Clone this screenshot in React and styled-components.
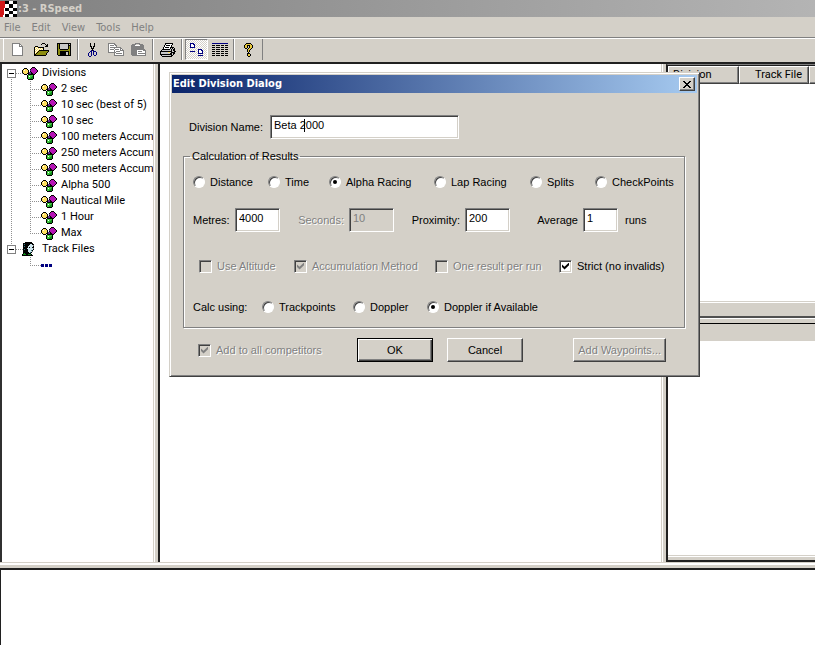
import React from "react";
import styled, { createGlobalStyle, css } from "styled-components";

const GlobalStyle = createGlobalStyle`
    * {
        box-sizing: border-box;
    }
    body {
        margin: 0;
        background-color: #fff;
        color: #000;
        font-family: Roboto, 'Noto Sans', sans-serif;
        font-size: 11px;
        line-height: 16px;
    }
    ul {
        margin: 0;
        padding: 0;
        list-style: none;
    }
`;

const palette = {
    k: "#000", d: "#808080", w: "#fff", y: "#ffe060", m: "#b414b4", g: "#3cc83c",
    G: "#128a1c", p: "#5a2d8c", o: "#8c8c10", l: "#c8c8c8", b: "#000080", t: "#2f7a80",
    c: "#cfe6ee", Y: "#e8c83c", r: "#d01818",
};

const art = {
    division: [
        "..........kkk...",
        "..kkk....kmmmk..",
        ".kyyyk..kmmmmmk.",
        "kywyyyk.pmmmmmmk",
        "kyyyyyk.kmmmmmmk",
        "kyyyyykppkmmmmk.",
        ".kyyykkppkkmmk..",
        "..kkk.kkkkkkk...",
        ".....kgggggk....",
        ".....kgwggGk....",
        ".....kgggGGk....",
        ".....kggGGGk....",
        "......kkkkk.....",
    ],
    track: [
        "...kkkkkkk..",
        ".kkkkkkkkkk.",
        ".ktkkkkkcckk",
        ".kkkkkkccccd",
        ".ktkkkccccck",
        ".kkkkkckcckk",
        ".kkkkccccccd",
        ".ktkkkccccck",
        ".kkkkkccctk.",
        ".kkkkkccccd.",
        ".kkkkkkctk..",
        ".kGkkkkkk...",
        "kGGGkkGGGk..",
        "kkkkkkkkkkk.",
    ],
    fresh: [
        "dddddddd...",
        "dwwwwwwdd..",
        "dwwwwwwdwd.",
        "dwwwwwwdddd",
        "dwwwwwwwwwd",
        "dwwwwwwwwwd",
        "dwwwwwwwwwd",
        "dwwwwwwwwwd",
        "dwwwwwwwwwd",
        "dwwwwwwwwwd",
        "dwwwwwwwwwd",
        "dwwwwwwwwwd",
        "ddddddddddd",
    ],
    open: [
        ".........kkk....",
        "........k...k.k.",
        ".............kk.",
        "..kkk.......kkk.",
        ".kywykkkkkk.....",
        ".kwywywywyk.....",
        ".kywywywywk.....",
        ".kwywykkkkkkkkkk",
        ".kywykoooooooook",
        ".kwykoooooooook.",
        ".kykoooooooook..",
        ".kkooooooooook..",
        ".kkkkkkkkkkkk...",
    ],
    save: [
        "kkkkkkkkkkkkkk",
        "kokllllllllklk",
        "kokllllllllkkk",
        "kokllllllllkok",
        "kokllllllllkok",
        "kokllllllllkok",
        "kookkkkkkkkook",
        "kooooooooooook",
        "kookkkkkkkkkok",
        "kookkkkkkllkok",
        "kookkkkkkllkok",
        "kookkkkkkllkok",
        ".kkkkkkkkkkkkk",
    ],
    cut: [
        "..k...k..",
        "..k...k..",
        "..k...k..",
        "..kk.kk..",
        "...k.k...",
        "...kkk...",
        "....k....",
        "...bkb...",
        "..bb.bbb.",
        ".b.b.b..b",
        "b..b.b..b",
        "b..b.b..b",
        "b..b..bb.",
        ".bb......",
    ],
    copy: [
        "ddddddd.........",
        "dwwwwwdd........",
        "dwddddwdd.......",
        "dwwwwwwwd.......",
        "dwddddddddddd...",
        "dwwwwwdwwwwwdd..",
        "dwddddwddddwdwd.",
        "dwwwwwdwwwwwdddd",
        "dwwwwwdwddddwwwd",
        "ddddddddwwwwwwwd",
        "......dwddddddwd",
        "......dwwwwwwwwd",
        "......dddddddddd",
    ],
    paste: [
        "....ddddd......",
        ".dddd...dddd...",
        "ddddwwwwwdddd..",
        "ddddddddddddd..",
        "ddddddddddddd..",
        "ddddddddddddd..",
        "dddddddddddddd.",
        "ddddddwwwwwwddd",
        "ddddddwddddwwwd",
        "ddddddwwwwwwwwd",
        "ddddddwdddddddd",
        "ddddddwwwwwwwwd",
        ".dddddddddddddd",
    ],
    print: [
        ".....kkkkkkkk...",
        ".....kwwwwwwk...",
        "....kwkkkkwk....",
        "....kwwwwwwk....",
        "...kwkkkkwkkkk..",
        "...kwwwwwwklklk.",
        "..kkkkkkkklklkk.",
        ".klllllllllklkk.",
        "kkkkkkkkkkkkllkk",
        "klllllllyylkkkk.",
        "klllllllllkklkk.",
        "kkkkkkkkkkkklk..",
        ".klllllllllkk...",
        "..kkkkkkkkkk....",
    ],
    places: [
        "bbbb..........",
        "bwwbb.........",
        "bwwwb.........",
        "bwwwb.........",
        "bbbbb.........",
        "..............",
        "........bbbb..",
        "........bwwbb.",
        "bbbbb...bwwwb.",
        "........bwwwb.",
        "........bbbbb.",
        "..............",
        "........bbbbb.",
    ],
    grid: [
        "bbbbbbbbbbbbbbbb",
        "................",
        "kkk.kkkk.kkk.kkk",
        "................",
        "kkk.kkkk.kkk.kkk",
        "................",
        "kkk.kkkk.kkk.kkk",
        "................",
        "kkk.kkkk.kkk.kkk",
        "................",
        "kkk.kkkk.kkk.kkk",
        "................",
        "kkk.kkkk.kkk.kkk",
    ],
    help: [
        "..kkkkk...",
        ".kYYYYYk..",
        "kYYkkkYYk.",
        "kYYk.kYYk.",
        "kYYk.kYYk.",
        ".kk.kYYk..",
        "...kYYk...",
        "...kYk....",
        "...kYk....",
        "....k.....",
        "...kkk....",
        "...kYYk...",
        "...kYYk...",
        "....kk....",
    ],
    dots: ["bbb.bbb.bbb", "bbb.bbb.bbb", "bbb.bbb.bbb"],
    flag: [
        "rrrrrkkkkwwwwkkkk",
        "rrrrrkkkkwwwwkkkk",
        "rrrrrkkkkwwwwkkkk",
        "rrrrrwwwwkkkkwwww",
        "rrrrrwwwwkkkkwwww",
        "rrrrrwwwwkkkkwwww",
        "rrrrrwwwwkkkkwwww",
        "rrrrwkkkkwwwwkkkk",
        "rrrrwkkkkwwwwkkkk",
        "rrrrwkkkkwwwwkkkk",
        "rrrrwwwwwkkkkwwww",
        "rrrrwwwwwkkkkwwww",
        "rrrrwwwwwkkkkwwww",
        "rrrrwkkkkwwwwkkkk",
        "rrrwwkkkkwwwwkkkk",
        "rrrwwkkkkwwwwkkkk",
    ],
};

const Icon = ({ name }) => {
    const rows = art[name];
    return (
        <Svg width={rows[0].length} height={rows.length} aria-hidden="true">
            {rows.map((row, y) =>
                [...row].map((ch, x) =>
                    ch === "." ? null : <rect key={`${x}-${y}`} x={x} y={y} width="1" height="1" fill={palette[ch]} />
                )
            )}
        </Svg>
    );
};

const menus = ["File", "Edit", "View", "Tools", "Help"];

const toolGroups = [
    [{ icon: "fresh", label: "New" }, { icon: "open", label: "Open" }, { icon: "save", label: "Save" }],
    [{ icon: "cut", label: "Cut" }, { icon: "copy", label: "Copy" }, { icon: "paste", label: "Paste" }],
    [{ icon: "print", label: "Print" }],
    [{ icon: "places", label: "Places", pressed: true }, { icon: "grid", label: "Details" }],
    [{ icon: "help", label: "Help" }],
];

const divisions = [
    "2 sec",
    "10 sec (best of 5)",
    "10 sec",
    "100 meters Accum",
    "250 meters Accum",
    "500 meters Accum",
    "Alpha 500",
    "Nautical Mile",
    "1 Hour",
    "Max",
];

const modes = ["Distance", "Time", "Alpha Racing", "Lap Racing", "Splits", "CheckPoints"];
const sources = ["Trackpoints", "Doppler", "Doppler if Available"];

const Option = ({ type, name, label, checked, disabled }) => (
    <OptionLabel $disabled={disabled}>
        {type === "radio" ? (
            <Radio type="radio" name={name} defaultChecked={checked} />
        ) : (
            <Check type="checkbox" defaultChecked={checked} disabled={disabled} />
        )}
        <span>{label}</span>
    </OptionLabel>
);

const NavTree = () => (
    <TreePane>
        <Trunk>
            <Branch>
                <Expander type="button" aria-label="Collapse Divisions" />
                <IconCell><Icon name="division" /></IconCell>
                <span>Divisions</span>
            </Branch>
            <Leaves>
                {divisions.map((name) => (
                    <Leaf key={name}>
                        <Icon name="division" />
                        <span>{name}</span>
                    </Leaf>
                ))}
            </Leaves>
            <Branch>
                <Expander type="button" aria-label="Collapse Track Files" />
                <IconCell><Icon name="track" /></IconCell>
                <span>Track Files</span>
            </Branch>
        </Trunk>
        <LooseLeaves>
            <Leaf>
                <Icon name="dots" />
            </Leaf>
        </LooseLeaves>
    </TreePane>
);

const EditDivisionDialog = () => (
    <Dialog role="dialog" aria-labelledby="dialog-title">
        <DialogTitle>
            <span id="dialog-title">Edit Division Dialog</span>
            <CloseButton type="button" aria-label="Close">
                <Svg width="8" height="7" aria-hidden="true">
                    <path d="M0 0h2v1h1v1h2v-1h1v-1h2v1h-1v1h-1v1h-1v1h1v1h1v1h1v1h-2v-1h-1v-1h-2v1h-1v1h-2v-1h1v-1h1v-1h1v-1h-1v-1h-1v-1h-1z" />
                </Svg>
            </CloseButton>
        </DialogTitle>
        <NameRow>
            <label htmlFor="division-name">Division Name:</label>
            <NameBox>
                <Field id="division-name" defaultValue="Beta 2000" />
                <Caret />
            </NameBox>
        </NameRow>
        <Group>
            <legend>Calculation of Results</legend>
            <ModeRow>
                {modes.map((mode) => (
                    <Option key={mode} type="radio" name="mode" label={mode} checked={mode === "Alpha Racing"} />
                ))}
            </ModeRow>
            <NumberRow>
                <label htmlFor="metres">Metres:</label>
                <Field id="metres" defaultValue="4000" />
                <FieldLabel htmlFor="seconds" $disabled>Seconds:</FieldLabel>
                <Field id="seconds" defaultValue="10" disabled />
                <FieldLabel htmlFor="proximity">Proximity:</FieldLabel>
                <Field id="proximity" defaultValue="200" />
                <FieldLabel htmlFor="average">Average</FieldLabel>
                <Field id="average" defaultValue="1" />
                <span>runs</span>
            </NumberRow>
            <CheckRow>
                <Option label="Use Altitude" disabled />
                <Option label="Accumulation Method" checked disabled />
                <Option label="One result per run" disabled />
                <Option label="Strict (no invalids)" checked />
            </CheckRow>
            <SourceRow>
                <span>Calc using:</span>
                {sources.map((source) => (
                    <Option key={source} type="radio" name="source" label={source} checked={source === "Doppler if Available"} />
                ))}
            </SourceRow>
        </Group>
        <ButtonRow>
            <Option label="Add to all competitors" checked disabled />
            <PushButton type="button" $primary>OK</PushButton>
            <PushButton type="button">Cancel</PushButton>
            <PushButton type="button" disabled>Add Waypoints...</PushButton>
        </ButtonRow>
    </Dialog>
);

const App = () => (
    <Window>
        <GlobalStyle />
        <TitleBar>
            <Icon name="flag" />
            <span>:3 - RSpeed</span>
        </TitleBar>
        <MenuBar>
            {menus.map((menu) => (
                <MenuItem key={menu} type="button">{menu}</MenuItem>
            ))}
        </MenuBar>
        <Toolbar>
            {toolGroups.map((group) => (
                <ToolGroup key={group[0].icon}>
                    {group.map((tool) => (
                        <ToolButton key={tool.icon} type="button" aria-label={tool.label} $pressed={tool.pressed}>
                            <Icon name={tool.icon} />
                        </ToolButton>
                    ))}
                </ToolGroup>
            ))}
        </Toolbar>
        <Workspace>
            <NavTree />
            <Splitter />
            <MapPane />
            <Splitter />
            <ResultsPane>
                <ResultsTable>
                    <thead>
                        <tr>
                            <HeadCell>Division</HeadCell>
                            <HeadCell $right>Track File</HeadCell>
                            <HeadCell />
                        </tr>
                    </thead>
                </ResultsTable>
                <ResultsBody />
                <ScrollTrack />
                <Divider />
                <LowerHead />
                <LowerBody />
                <LowerEdge />
            </ResultsPane>
        </Workspace>
        <BottomSplitter />
        <BottomPane />
        <EditDivisionDialog />
    </Window>
);

export default App;

const raised = css`
    border: 1px solid;
    border-color: #fff #404040 #404040 #fff;
    box-shadow: inset -1px -1px #808080;
`;
const sunken = css`
    border: 1px solid;
    border-color: #808080 #fff #fff #808080;
    box-shadow: inset 1px 1px #404040, inset -1px -1px #d4d0c8;
`;
const etched = css`
    color: #808080;
    text-shadow: 1px 1px #fff;
`;

const Svg = styled.svg`
    display: block;
    flex: none;
    shape-rendering: crispEdges;
`;
const Window = styled.div`
    display: flex;
    flex-direction: column;
    min-height: 100vh;
    background-color: #d4d0c8;
`;
const TitleBar = styled.header`
    display: flex;
    align-items: center;
    gap: 1px;
    height: 17px;
    background: linear-gradient(to right, #808080, #b4b4b4);
    color: #d4d0c8;
    font-family: 'DejaVu Sans Condensed', 'Noto Sans', sans-serif;
    font-weight: bold;
`;
const MenuBar = styled.nav`
    display: flex;
    gap: 11px;
    height: 20px;
    padding: 0 4px;
    font-family: 'DejaVu Sans Condensed', 'Noto Sans', sans-serif;
`;
const MenuItem = styled.button`
    padding: 1px 0 0;
    border: none;
    background: none;
    color: #808080;
    font: inherit;
`;
const Toolbar = styled.div`
    display: flex;
    height: 25px;
    padding-left: 3px;
    border-top: 1px solid #808080;
    box-shadow: inset 0 1px #fff;
`;
const ToolGroup = styled.div`
    display: flex;
    align-items: center;
    margin: 1px 0 2px;
    padding: 0 2px;
    border-left: 1px solid #fff;
    border-right: 1px solid #808080;
`;
const ToolButton = styled.button`
    display: flex;
    align-items: center;
    justify-content: center;
    width: 23px;
    height: 21px;
    padding: 0;
    border: 1px solid transparent;
    background: none;
    ${(props) => props.$pressed && css`
        border-color: #808080 #fff #fff #808080;
        background: repeating-conic-gradient(#fff 0 25%, #d4d0c8 0 50%) 0 0 / 2px 2px;
    `}
`;

const Workspace = styled.main`
    display: flex;
    flex: 1;
    border-top: 2px solid #202020;
`;
const TreePane = styled.aside`
    flex: 0 0 153px;
    padding-top: 1px;
    border-left: 2px solid #303030;
    background-color: #fff;
    overflow: hidden;
    white-space: nowrap;
`;
const dottedDown = "repeating-linear-gradient(to bottom, #909090 0 1px, transparent 1px 2px)";
const dottedAcross = "repeating-linear-gradient(to right, #909090 0 1px, transparent 1px 2px)";
const Trunk = styled.div`
    margin-left: 5px;
    background: ${dottedDown} 4px 8px / 1px calc(100% - 16px) no-repeat;
`;
const Branch = styled.div`
    display: flex;
    align-items: center;
    height: 16px;
    background: ${dottedAcross} 9px 8px / 8px 1px no-repeat;
`;
const Expander = styled.button`
    width: 9px;
    height: 9px;
    padding: 0;
    border: 1px solid #808080;
    background: linear-gradient(#000, #000) center / 5px 1px no-repeat #fff;
`;
const IconCell = styled.span`
    display: flex;
    width: 16px;
    margin: 0 4px 0 6px;
`;
const Leaves = styled.ul`
    margin-left: 23px;
    background: ${dottedDown} 0 0 / 1px calc(100% - 8px) no-repeat;
`;
const LooseLeaves = styled(Leaves)`
    margin-left: 28px;
`;
const Leaf = styled.li`
    display: flex;
    align-items: center;
    gap: 4px;
    height: 16px;
    padding-left: 11px;
    background: ${dottedAcross} 0 8px / 12px 1px no-repeat;
`;
const Splitter = styled.div`
    flex: 0 0 5px;
    border-left: 1px solid #d4d0c8;
    background-color: #d4d0c8;
    box-shadow: inset 1px 0 #fff;
`;
const MapPane = styled.section`
    flex: 1;
    border-left: 2px solid #202020;
    background-color: #fff;
`;
const ResultsPane = styled.section`
    display: flex;
    flex-direction: column;
    flex: 0 0 149px;
    border-left: 2px solid #202020;
    border-top: 1px solid #808080;
`;
const ResultsTable = styled.table`
    width: 100%;
    table-layout: fixed;
    border-collapse: separate;
    border-spacing: 0;
    border-top: 1px solid #202020;
`;
const HeadCell = styled.th`
    width: ${(props) => (props.$right ? "70px" : "71px")};
    height: 18px;
    padding: 0 6px 0 4px;
    ${raised}
    font-weight: normal;
    line-height: 16px;
    text-align: ${(props) => (props.$right ? "right" : "left")};
    &:last-child {
        width: auto;
        padding: 0;
        border-right: none;
        box-shadow: inset 0 -1px #808080;
    }
`;
const ResultsBody = styled.div`
    flex: 216 1 0;
    background-color: #fff;
`;
const ScrollTrack = styled.div`
    height: 15px;
    border-top: 1px solid #d4d0c8;
    box-shadow: inset 0 1px #fff;
`;
const Divider = styled.div`
    height: 8px;
    border-top: 2px solid #505050;
    border-bottom: 1px solid #000;
    background-color: #d4d0c8;
    box-shadow: inset 0 1px #fff;
`;
const LowerHead = styled.div`
    height: 17px;
`;
const LowerBody = styled.div`
    flex: 214 1 0;
    background-color: #fff;
`;
const LowerEdge = styled.div`
    height: 7px;
    border-top: 1px solid #d4d0c8;
    border-bottom: 2px solid #202020;
    box-shadow: inset 0 1px #fff;
`;
const BottomSplitter = styled.div`
    height: 8px;
    border-top: 1px solid #d4d0c8;
    border-bottom: 2px solid #202020;
    box-shadow: inset 0 2px #fff;
`;
const BottomPane = styled.section`
    height: 75px;
    border-left: 1px solid #202020;
    background-color: #fff;
`;

const Dialog = styled.section`
    position: absolute;
    top: 72px;
    left: 169px;
    width: 531px;
    padding: 2px;
    border: 1px solid;
    border-color: #d4d0c8 #404040 #404040 #d4d0c8;
    box-shadow: inset 1px 1px #fff, inset -1px -1px #808080;
    background-color: #d4d0c8;
    font-family: 'Liberation Sans', Arial, sans-serif;
`;
const DialogTitle = styled.div`
    display: flex;
    align-items: center;
    justify-content: space-between;
    height: 18px;
    padding: 0 2px 0 1px;
    background: linear-gradient(to right, #0a246a, #a6caf0);
    color: #fff;
    font-family: 'DejaVu Sans Condensed', 'Noto Sans', sans-serif;
    font-weight: bold;
`;
const CloseButton = styled.button`
    display: flex;
    align-items: center;
    justify-content: center;
    width: 16px;
    height: 14px;
    padding: 0;
    ${raised}
    background-color: #d4d0c8;
`;
const NameRow = styled.div`
    display: grid;
    grid-template-columns: 81px 189px;
    align-items: center;
    margin: 22px 0 9px 17px;
`;
const NameBox = styled.div`
    position: relative;
`;
const Caret = styled.span`
    position: absolute;
    top: 4px;
    left: 34px;
    width: 1px;
    height: 13px;
    background-color: #000;
`;
const Field = styled.input`
    display: block;
    width: 100%;
    min-width: 0;
    height: 24px;
    padding: 0 3px 4px;
    border-radius: 0;
    outline: none;
    ${sunken}
    background-color: #fff;
    color: #000;
    font: inherit;
    &:disabled {
        background-color: #d4d0c8;
        color: #808080;
    }
`;
const Group = styled.fieldset`
    display: flex;
    flex-direction: column;
    min-width: 0;
    margin: 0 12px 0 11px;
    padding: 10px 8px 12px 9px;
    border: 1px solid #808080;
    box-shadow: 1px 1px #fff, inset 1px 1px #fff;
    legend {
        padding: 0 2px;
        margin-left: -3px;
    }
`;
const ModeRow = styled.div`
    display: grid;
    grid-template-columns: 75px 61px 105px 96px 65px 1fr;
    align-items: center;
`;
const NumberRow = styled.div`
    display: grid;
    grid-template-columns: 42px 45px 69px 45px 71px 45px 73px 35px 1fr;
    align-items: center;
    margin-top: 18px;
    > span {
        padding-left: 7px;
    }
`;
const FieldLabel = styled.label`
    justify-self: end;
    padding-right: 5px;
    ${(props) => props.$disabled && etched}
`;
const CheckRow = styled.div`
    display: grid;
    grid-template-columns: 95px 141px 124px 1fr;
    margin: 26px 0 25px 6px;
`;
const SourceRow = styled.div`
    display: grid;
    grid-template-columns: 69px 91px 74px 1fr;
`;
const ButtonRow = styled.div`
    display: grid;
    grid-template-columns: 159px 90px 76px 1fr;
    align-items: center;
    margin: 10px 31px 12px 26px;
    > button:last-child {
        justify-self: end;
    }
`;
const PushButton = styled.button`
    width: max-content;
    min-width: 76px;
    height: 24px;
    padding: 0 4px 1px;
    ${raised}
    background-color: #d4d0c8;
    color: #000;
    font: inherit;
    ${(props) => props.$primary && css`
        border-color: #000;
        box-shadow: inset 1px 1px #fff, inset -1px -1px #404040, inset -2px -2px #808080;
    `}
    &:disabled {
        ${etched}
    }
`;
const OptionLabel = styled.label`
    display: flex;
    align-items: center;
    gap: 5px;
    white-space: nowrap;
    ${(props) => props.$disabled && etched}
`;
const Radio = styled.input`
    appearance: none;
    display: flex;
    align-items: center;
    justify-content: center;
    width: 12px;
    height: 12px;
    margin: 0;
    border: 1px solid;
    border-color: #808080 #fff #fff #808080;
    border-radius: 50%;
    box-shadow: inset 1px 1px #404040;
    background-color: #fff;
    &:checked::after {
        content: "";
        width: 4px;
        height: 4px;
        border-radius: 50%;
        background-color: #000;
    }
`;
const Check = styled.input`
    appearance: none;
    display: flex;
    align-items: center;
    justify-content: center;
    width: 13px;
    height: 13px;
    margin: 0;
    ${sunken}
    background-color: #fff;
    &:disabled {
        background-color: #d4d0c8;
    }
    &:checked::after {
        content: "";
        width: 7px;
        height: 7px;
        background-color: #000;
        clip-path: polygon(0 28%, 36% 62%, 100% 0, 100% 38%, 36% 100%, 0 66%);
    }
    &:checked:disabled::after {
        background-color: #808080;
    }
`;
